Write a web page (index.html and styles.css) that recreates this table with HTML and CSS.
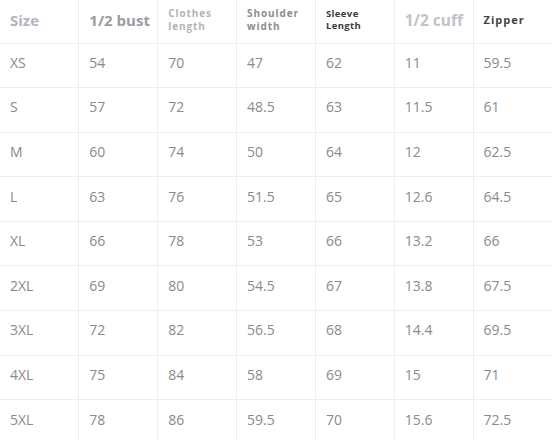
FILE: index.html
```html
<!DOCTYPE html>
<html>
<head>
<meta charset="utf-8">
<link rel="stylesheet" href="styles.css">
</head>
<body>
<table class="size-table">
  <thead>
    <tr>
      <th class="h-size">Size</th>
      <th class="h-bust">1/2 bust</th>
      <th class="h-clothes">Clothes<br>length</th>
      <th class="h-shoulder">Shoulder<br>width</th>
      <th class="h-sleeve">Sleeve<br>Length</th>
      <th class="h-cuff">1/2 cuff</th>
      <th class="h-zipper">Zipper</th>
    </tr>
  </thead>
  <tbody>
    <tr><td>XS</td><td>54</td><td>70</td><td>47</td><td>62</td><td>11</td><td>59.5</td></tr>
    <tr><td>S</td><td>57</td><td>72</td><td>48.5</td><td>63</td><td>11.5</td><td>61</td></tr>
    <tr><td>M</td><td>60</td><td>74</td><td>50</td><td>64</td><td>12</td><td>62.5</td></tr>
    <tr><td>L</td><td>63</td><td>76</td><td>51.5</td><td>65</td><td>12.6</td><td>64.5</td></tr>
    <tr><td>XL</td><td>66</td><td>78</td><td>53</td><td>66</td><td>13.2</td><td>66</td></tr>
    <tr><td>2XL</td><td>69</td><td>80</td><td>54.5</td><td>67</td><td>13.8</td><td>67.5</td></tr>
    <tr><td>3XL</td><td>72</td><td>82</td><td>56.5</td><td>68</td><td>14.4</td><td>69.5</td></tr>
    <tr><td>4XL</td><td>75</td><td>84</td><td>58</td><td>69</td><td>15</td><td>71</td></tr>
    <tr><td>5XL</td><td>78</td><td>86</td><td>59.5</td><td>70</td><td>15.6</td><td>72.5</td></tr>
  </tbody>
</table>
</body>
</html>
```

FILE: styles.css
```css
html, body {
  margin: 0;
  padding: 0;
  background: #ffffff;
  overflow: hidden;
}

body {
  font-family: "Open Sans", "Noto Sans", sans-serif;
}

.size-table {
  width: 552px;
  table-layout: fixed;
  border-collapse: collapse;
  border-spacing: 0;
}

.size-table th,
.size-table td {
  text-align: left;
  vertical-align: middle;
  padding: 0 0 0 10px;
  border-bottom: 1px solid #eceef1;
  border-left: 1px solid #eceef1;
}

.size-table th:first-child,
.size-table td:first-child {
  border-left: none;
}

.size-table thead tr {
  height: 43px;
}

.size-table tbody tr {
  height: 44.6px;
}

.size-table th {
  font-weight: 700;
  line-height: 1.3;
  padding-bottom: 2px;
}

.size-table td {
  font-size: 14px;
  line-height: 18px;
  font-weight: 400;
  color: #8a8a8a;
  padding-bottom: 5px;
}

.h-size {
  font-size: 15px;
  color: #b1b5be;
}

.h-bust {
  font-size: 15px;
  color: #9a9ba1;
}

.h-clothes {
  font-size: 10px;
  letter-spacing: 0.9px;
  color: #b3b3b6;
}

.h-shoulder {
  font-size: 10px;
  letter-spacing: 0.9px;
  color: #8c8c90;
}

.h-sleeve {
  font-size: 9.5px;
  letter-spacing: 0.4px;
  color: #3a3a3a;
}

.h-cuff {
  font-size: 15.5px;
  font-weight: 600;
  color: #c2c3c9;
}

.h-zipper {
  font-size: 11px;
  letter-spacing: 1px;
  color: #444444;
}
```
